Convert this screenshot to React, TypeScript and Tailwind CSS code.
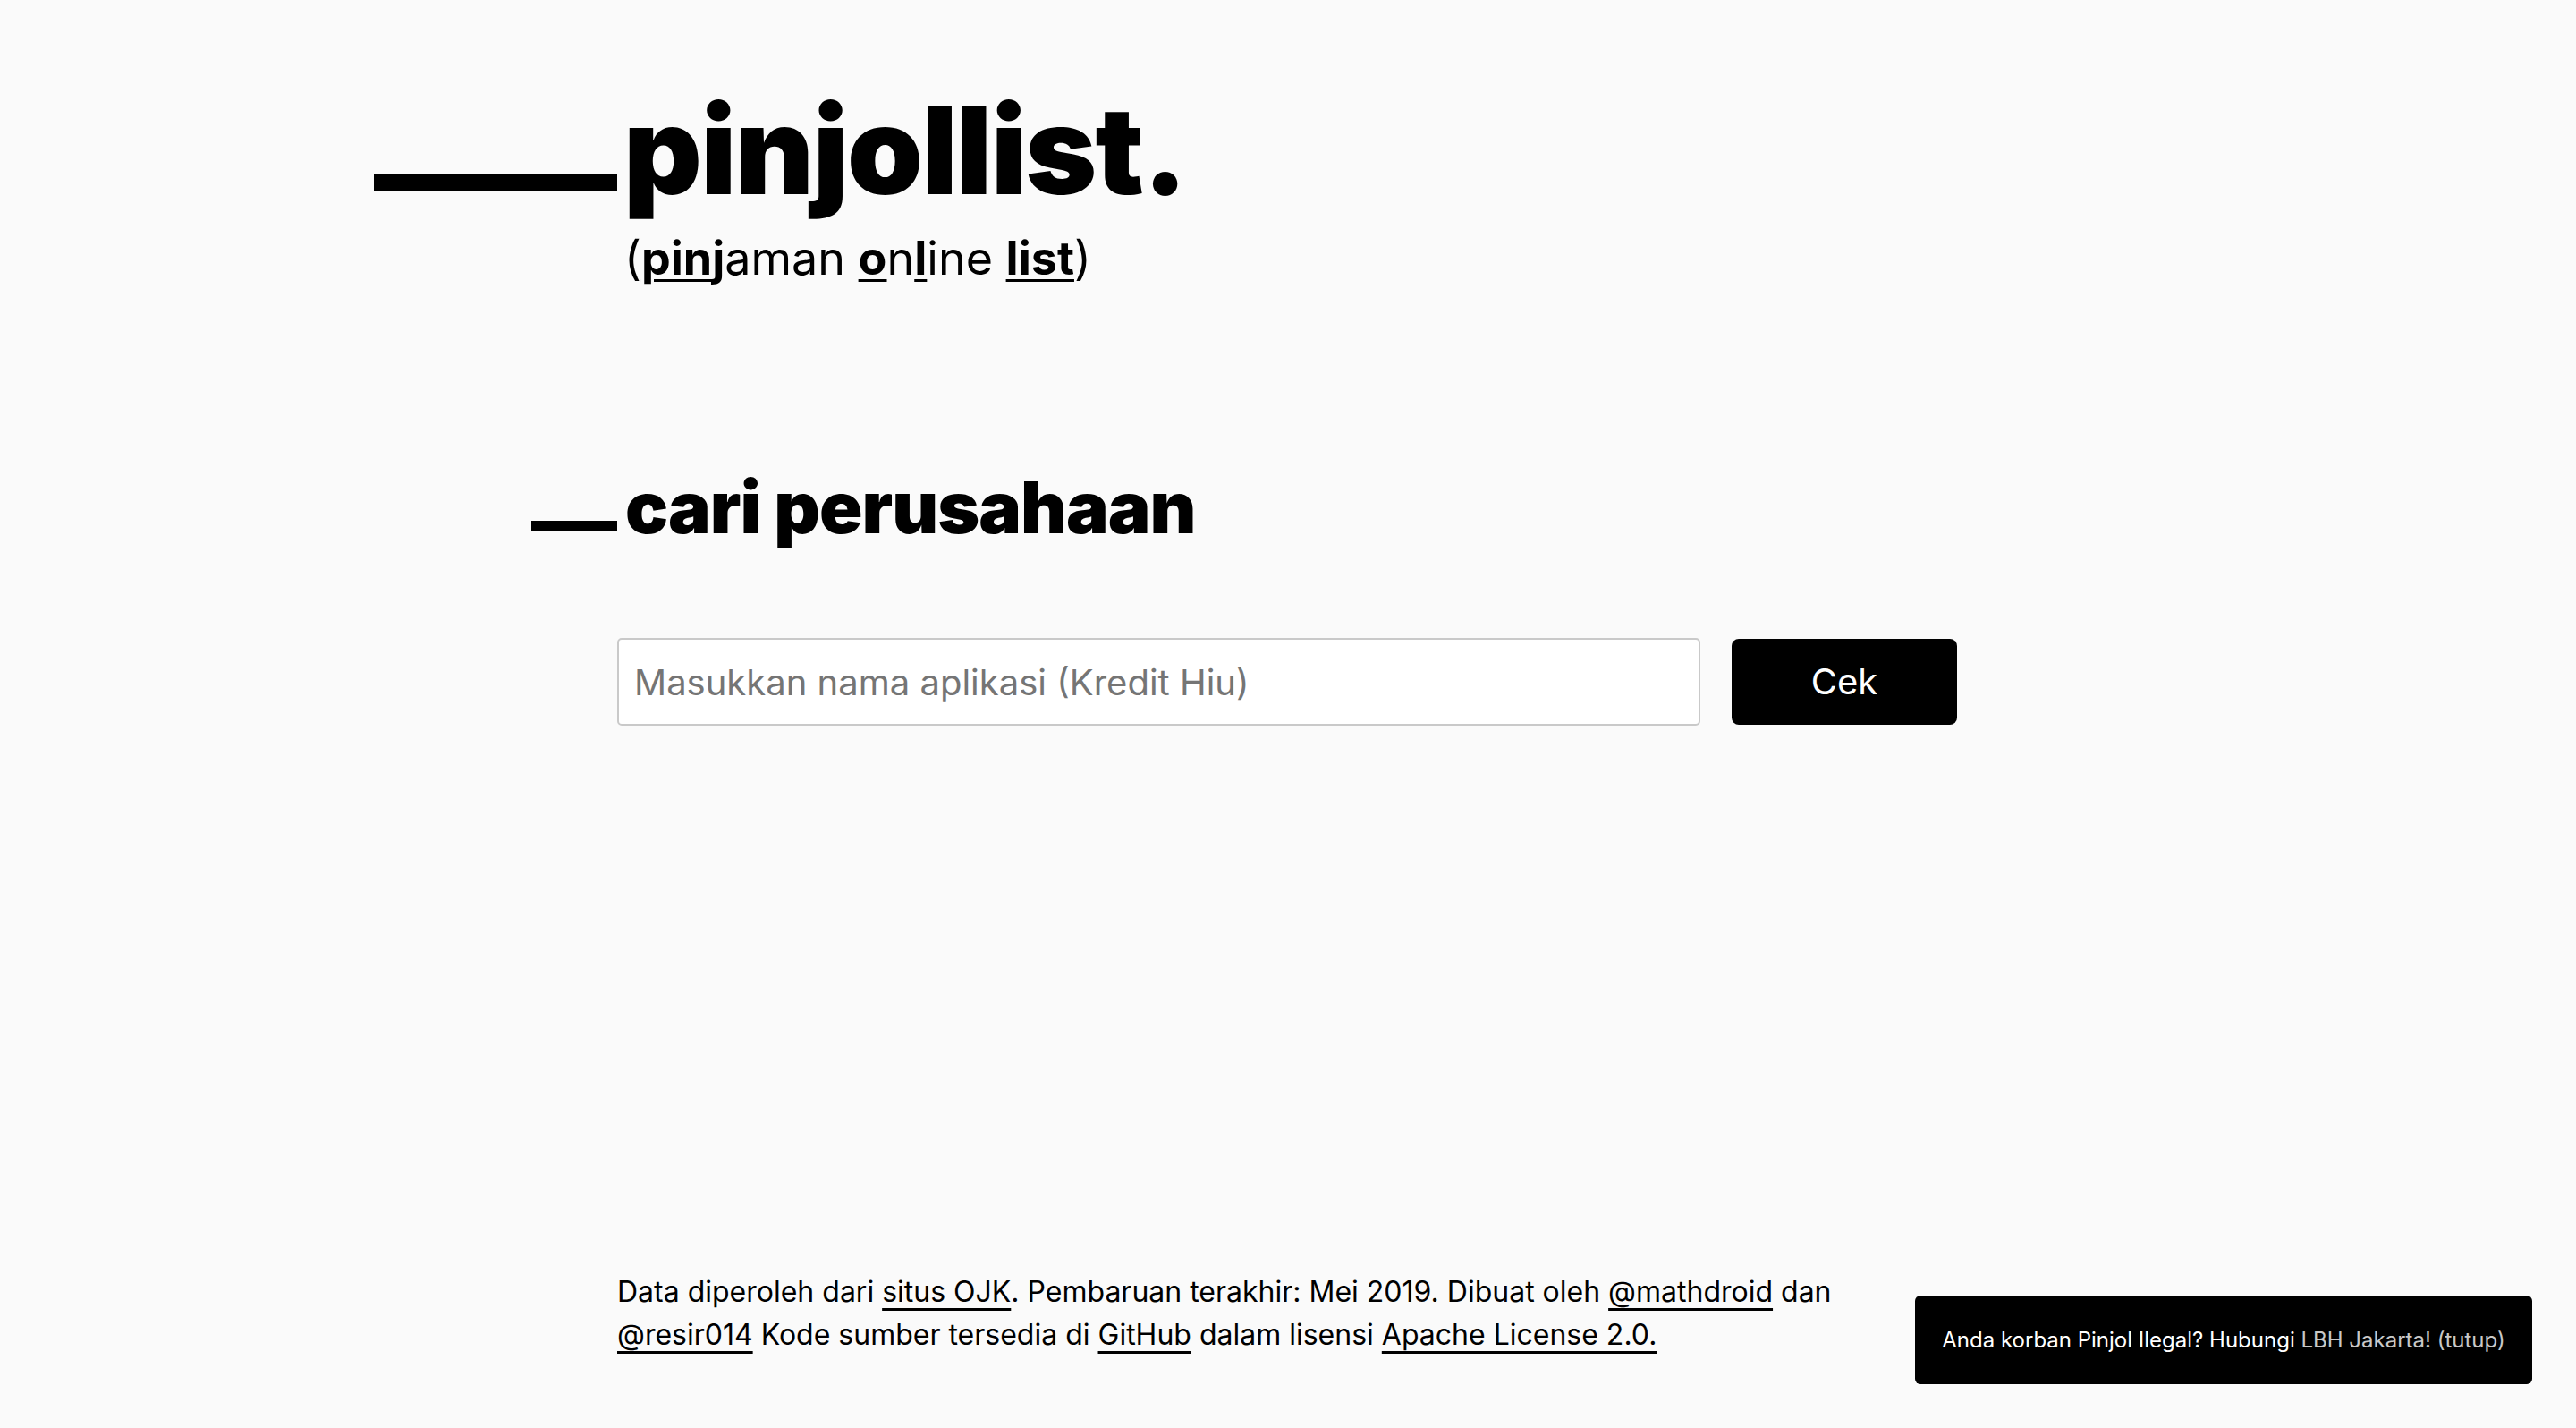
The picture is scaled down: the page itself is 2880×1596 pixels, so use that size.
import React from "react";

const font = { fontFamily: "Inter, 'Noto Sans', sans-serif" };

function U({ children }: { children: React.ReactNode }) {
  return (
    <a
      href="#"
      className="text-black underline decoration-[3px] underline-offset-[7px]"
    >
      {children}
    </a>
  );
}

export default function App() {
  return (
    <div
      className="min-h-screen bg-[#fafafa] text-black flex flex-col"
      style={font}
    >
      <div className="w-[1500px] mx-auto flex flex-col flex-1">
        {/* Logo */}
        <div className="pt-[100px] -ml-[272px]">
          <h1 className="text-[136px] leading-none font-black tracking-[-0.012em] whitespace-nowrap">
            <span className="inline-block w-[272px] h-[19px] mb-[4px] bg-black mr-[7px] align-baseline" />
            pinjollist.
          </h1>
        </div>
        <p className="pl-[8px] mt-[22px] text-[52px] leading-[1.2]">
          (
          <b className="font-bold">
            <span className="underline decoration-[3px] underline-offset-[5px]">pin</span>j
          </b>
          aman{" "}
          <b className="font-bold underline decoration-[3px] underline-offset-[5px]">o</b>n
          <b className="font-bold underline decoration-[3px] underline-offset-[5px]">l</b>ine{" "}
          <b className="font-bold underline decoration-[3px] underline-offset-[5px]">list</b>)
        </p>

        {/* Search heading */}
        <div className="mt-[207px] -ml-[96px]">
          <h2 className="text-[80px] leading-none font-black tracking-[-0.012em] whitespace-nowrap">
            <span className="inline-block w-[96px] h-[12px] mb-[2px] bg-black mr-[9px] align-baseline" />
            cari perusahaan
          </h2>
        </div>

        {/* Search form */}
        <div className="mt-[106px] flex items-center gap-[35px]">
          <input
            type="text"
            placeholder="Masukkan nama aplikasi (Kredit Hiu)"
            className="w-[1211px] h-[98px] bg-white border-2 border-[#c9c9c9] rounded-[5px] px-[17px] text-[40px] text-black placeholder:text-[#757575] outline-none"
            style={font}
          />
          <button className="w-[252px] h-[96px] bg-black text-white rounded-[8px] text-[40px]">
            Cek
          </button>
        </div>

        {/* Footer */}
        <footer className="mt-auto pb-[80px] text-[32px] leading-[48px]">
          Data diperoleh dari <U>situs OJK</U>. Pembaruan terakhir: Mei 2019.
          Dibuat oleh <U>@mathdroid</U> dan <U>@resir014</U> Kode sumber
          tersedia di <U>GitHub</U> dalam lisensi <U>Apache License 2.0.</U>
        </footer>
      </div>

      {/* Toast */}
      <div className="fixed bottom-[49px] right-[49px] w-[690px] h-[99px] bg-black rounded-[6px] flex items-center justify-center text-white text-[24px] whitespace-nowrap">
        <span>
          Anda korban Pinjol Ilegal? Hubungi{" "}
          <a href="#" className="text-[#c8c8c8]">
            LBH Jakarta!
          </a>{" "}
          <span className="text-[#c8c8c8] cursor-pointer">(tutup)</span>
        </span>
      </div>
    </div>
  );
}
